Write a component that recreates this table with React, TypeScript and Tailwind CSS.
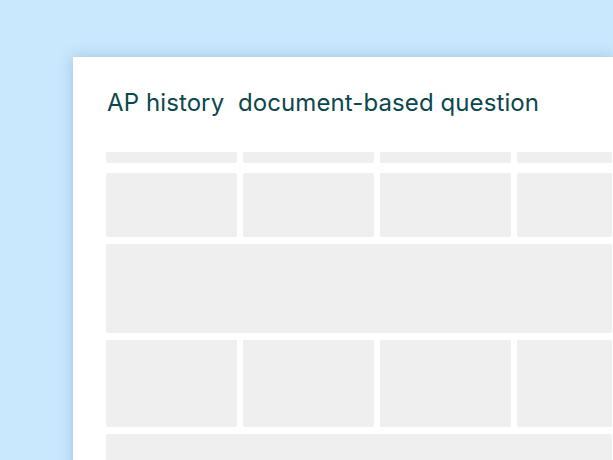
export default function App() {
  const cols = [0, 1, 2, 3];

  return (
    <div className="flex h-[460px] w-[613px] overflow-hidden bg-[#c9e7fd] pl-[73px] pt-[57px]">
      <div className="h-[480px] flex-1 bg-white pl-[33px] pt-[30px] shadow-[0_0_14px_rgba(40,90,140,0.25)]">
        <h1 className="ml-px font-['Inter',sans-serif] text-[24px] leading-[32px] font-normal tracking-[0.1px] text-[#0b474d] whitespace-pre">
          {"AP history  document-based question"}
        </h1>

        <div className="mt-[33px] grid grid-cols-[131px_131px_131px_95px] gap-x-[6px]">
          {cols.map((c) => (
            <div key={`h${c}`} className="h-[11px] rounded-[2px] bg-[#efefef]" />
          ))}
        </div>

        <div className="mt-[10px] grid grid-cols-[131px_131px_131px_95px] gap-x-[6px] gap-y-[7px]">
          {cols.map((c) => (
            <div key={`a${c}`} className="h-[64px] rounded-[2px] bg-[#efefef]" />
          ))}
          <div className="col-span-4 h-[89px] rounded-[2px] bg-[#efefef]" />
          {cols.map((c) => (
            <div key={`b${c}`} className="h-[87px] rounded-[2px] bg-[#efefef]" />
          ))}
          <div className="col-span-4 h-[60px] rounded-[2px] bg-[#efefef]" />
        </div>
      </div>
    </div>
  );
}
